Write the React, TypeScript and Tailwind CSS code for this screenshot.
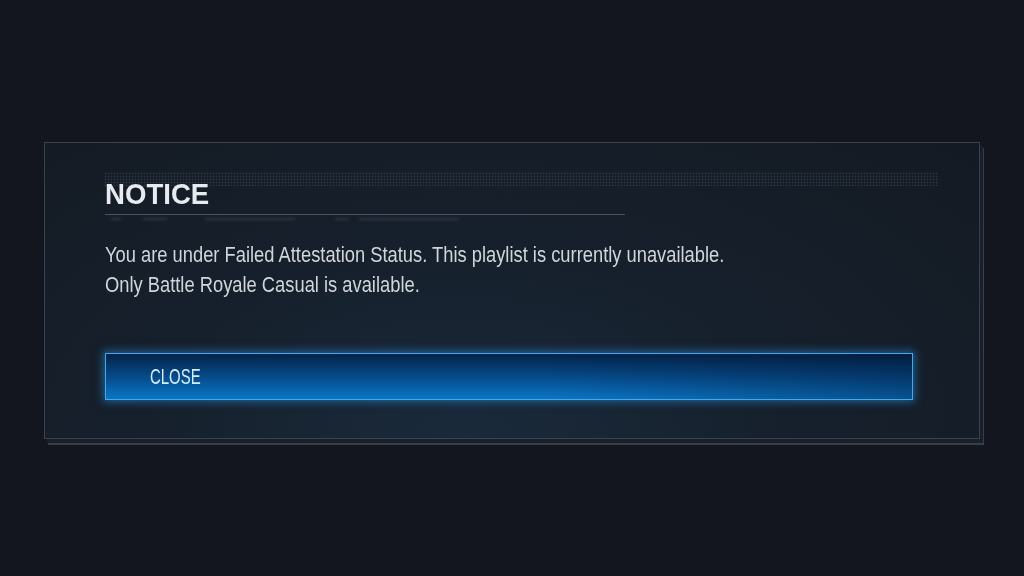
export default function App() {
  return (
    <div className="w-screen h-screen overflow-hidden bg-[#13161e] font-['Liberation_Sans',Arial,sans-serif]">
      <div className="pt-[142px] pl-[44px]">
        <NoticePanel />
      </div>
    </div>
  );
}

function NoticePanel() {
  return (
    <div className="relative w-[936px] h-[297px] border border-[#3a424d] bg-[radial-gradient(ellipse_at_45%_100%,#1a2a3b_0%,#16202c_45%,#141a23_100%)] shadow-[3px_4px_0_0_#1a2029,4px_6px_0_0_#373e48]">
      {/* halftone strip behind the title */}
      <div className="absolute left-[59px] top-[29px] w-[835px] h-[14px] opacity-70 bg-[radial-gradient(circle,#3b4552_0.7px,transparent_1.1px)] bg-[length:3px_3px]" />

      <div className="relative pl-[60px] pt-[36px]">
        <h1 className="h-[30px] leading-[30px] text-[30px] font-bold text-[#e7eaef]">
          <span className="inline-block origin-left scale-x-[0.92]">NOTICE</span>
        </h1>
        <div className="mt-[5px] w-[520px] h-px bg-[#4a525e]" />
        <div className="flex items-center h-[4px] mt-[2px] opacity-25 blur-[1.5px]">
          <div className="w-[10px] h-[2px] bg-[#7c8794] ml-[6px]" />
          <div className="w-[24px] h-[2px] bg-[#7c8794] ml-[22px]" />
          <div className="w-[90px] h-[2px] bg-[#7c8794] ml-[38px]" />
          <div className="w-[14px] h-[2px] bg-[#7c8794] ml-[40px]" />
          <div className="w-[100px] h-[2px] bg-[#7c8794] ml-[10px]" />
        </div>

        <div className="mt-[19px] text-[22px] leading-[30px] text-[#d0d5db] whitespace-nowrap">
          <p><span className="inline-block origin-left scale-x-[0.833]">You are under Failed Attestation Status. This playlist is currently unavailable.</span></p>
          <p><span className="inline-block origin-left scale-x-[0.833]">Only Battle Royale Casual is available.</span></p>
        </div>

        <button className="mt-[53px] w-[808px] h-[47px] flex items-center pl-[44px] border border-[#44a8ea] bg-[linear-gradient(90deg,rgba(0,0,0,0)_55%,rgba(2,18,46,0.35)_100%),linear-gradient(180deg,#03234a_0%,#064a88_50%,#0a76c6_100%)] shadow-[0_0_8px_2px_rgba(38,146,228,0.55)]">
          <span className="inline-block origin-left scale-x-[0.68] text-[22px] leading-none text-[#d6ecfa]">CLOSE</span>
        </button>
      </div>
    </div>
  );
}
